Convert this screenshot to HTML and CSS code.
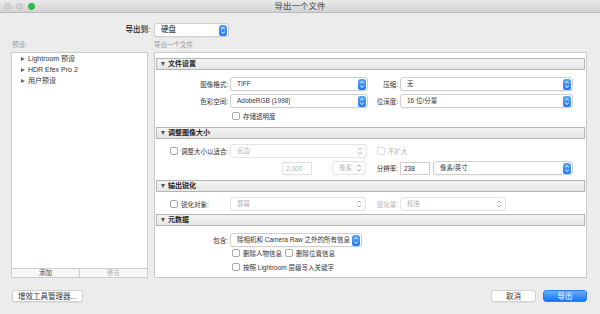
FILE: index.html
```html
<!DOCTYPE html>
<html lang="zh">
<head>
<meta charset="utf-8">
<title>导出一个文件</title>
<link rel="stylesheet" href="styles.css">
</head>
<body>
<div class="window">
  <div class="titlebar">
    <div class="lights">
      <span class="light gray"></span>
      <span class="light gray"></span>
      <span class="light green"></span>
    </div>
    <div class="title">导出一个文件</div>
  </div>

  <div class="dest">
    <span class="dest-label">导出到:</span>
    <div class="select w-dest"><span class="val big">硬盘</span><span class="stepper"></span></div>
  </div>

  <div class="caps">
    <span class="cap-left">预设:</span>
    <span class="cap-right">导出一个文件</span>
  </div>

  <div class="main">
    <div class="left">
      <ul class="presets">
        <li><span class="tri"></span>Lightroom 预设</li>
        <li><span class="tri"></span>HDR Efex Pro 2</li>
        <li><span class="tri"></span>用户预设</li>
      </ul>
      <div class="lbtns">
        <span class="lbtn">添加</span>
        <span class="lbtn off">移去</span>
      </div>
    </div>

    <div class="right">
      <div class="sec-head"><span class="dtri"></span>文件设置</div>
      <div class="sec-body b1">
        <div class="row">
          <span class="lbl l-main">图像格式:</span>
          <div class="select w-138"><span class="val">TIFF</span><span class="stepper"></span></div>
          <span class="lbl l-mid">压缩:</span>
          <div class="select w-173"><span class="val">无</span><span class="stepper"></span></div>
        </div>
        <div class="row">
          <span class="lbl l-main">色彩空间:</span>
          <div class="select w-138"><span class="val">AdobeRGB (1998)</span><span class="stepper"></span></div>
          <span class="lbl l-mid">位深度:</span>
          <div class="select w-173"><span class="val">16 位/分量</span><span class="stepper"></span></div>
        </div>
        <div class="crow ind-77"><span class="cb"></span>存储透明度</div>
      </div>

      <div class="sec-head"><span class="dtri"></span>调整图像大小</div>
      <div class="sec-body b2">
        <div class="row">
          <span class="cb ind-15"></span><span class="lbl l-cb">调整大小以适合:</span>
          <div class="select dis w-137"><span class="val">长边</span><span class="arrows"></span></div>
          <span class="cb dis-cb ind-10"></span><span class="dtext">不扩大</span>
        </div>
        <div class="row">
          <span class="input dis-in ind-127">2,000</span>
          <div class="select dis w-34 gap-20"><span class="val">像素</span><span class="arrows"></span></div>
          <span class="lbl l-mid3">分辨率:</span>
          <span class="input w-30">238</span>
          <div class="select w-140 gap-3"><span class="val">像素/英寸</span><span class="stepper"></span></div>
        </div>
      </div>

      <div class="sec-head"><span class="dtri"></span>输出锐化</div>
      <div class="sec-body b3">
        <div class="row">
          <span class="cb ind-15"></span><span class="lbl l-cb">锐化对象:</span>
          <div class="select dis w-136"><span class="val">屏幕</span><span class="arrows"></span></div>
          <span class="lbl l-mid3 dtext">锐化量:</span>
          <div class="select dis w-106"><span class="val">标准</span><span class="arrows"></span></div>
        </div>
      </div>

      <div class="sec-head"><span class="dtri"></span>元数据</div>
      <div class="sec-body b4">
        <div class="row">
          <span class="lbl l-main">包含:</span>
          <div class="select w-132"><span class="val">除相机和 Camera Raw 之外的所有信息</span><span class="stepper"></span></div>
        </div>
        <div class="crow ind-77">
          <span class="cb"></span><span class="ctext w-42">删除人物信息</span>
          <span class="cb"></span>删除位置信息
        </div>
        <div class="crow ind-77"><span class="cb"></span>按照 Lightroom 层级写入关键字</div>
      </div>
    </div>
  </div>

  <div class="footer">
    <span class="btn plug">增效工具管理器...</span>
    <span class="spacer"></span>
    <span class="btn cancel">取消</span>
    <span class="btn primary">导出</span>
  </div>
</div>
</body>
</html>
```

FILE: styles.css
```css
* { box-sizing: border-box; }
html, body { margin: 0; padding: 0; }
body {
  font-family: "Liberation Sans", "Noto Sans CJK SC", sans-serif;
  font-size: 6.5px;
  color: #333;
  background: #ececec;
}
.window {
  width: 600px;
  height: 314px;
  background: #ececec;
  display: flex;
  flex-direction: column;
  overflow: hidden;
}
.titlebar {
  height: 13px;
  flex: none;
  position: relative;
  background: linear-gradient(#e9e9e9, #d4d4d4);
  border-bottom: 1px solid #b9b9b9;
  display: flex;
  align-items: center;
  justify-content: center;
}
.lights {
  position: absolute;
  left: 4px;
  top: 3px;
  display: flex;
  gap: 5px;
}
.light {
  width: 7px;
  height: 7px;
  border-radius: 50%;
}
.light.gray { background: #d3d3d3; border: 1px solid #c1c1c1; }
.light.green { background: #2bc541; border: 1px solid #22a834; }
.title { font-size: 8.5px; color: #4a4a4a; line-height: 12px; }

.dest {
  height: 27px;
  flex: none;
  display: flex;
  align-items: flex-start;
  padding-top: 10px;
}
.dest-label {
  width: 150px;
  text-align: right;
  line-height: 14px;
  color: #222;
  font-size: 7.5px;
  font-weight: 500;
  margin-right: 4px;
}
.val.big { font-size: 7.5px; color: #222; }
.caps {
  height: 12px;
  flex: none;
  display: flex;
  color: #9a9a9a;
  line-height: 9px;
}
.cap-left { width: 154px; padding-left: 12px; }

.main {
  height: 226px;
  flex: none;
  display: flex;
  padding-left: 11px;
}
.left {
  width: 137px;
  display: flex;
  flex-direction: column;
  margin-right: 6px;
}
.presets {
  flex: 1;
  margin: 0;
  padding: 0 0 0 9px;
  list-style: none;
  background: #fff;
  border: 1px solid #cdcdcd;
  border-bottom: none;
  font-size: 7px;
}
.presets li {
  height: 11px;
  line-height: 11px;
  display: flex;
  align-items: center;
  color: #333;
}
.tri {
  width: 0;
  height: 0;
  border-left: 4px solid #666;
  border-top: 2.5px solid transparent;
  border-bottom: 2.5px solid transparent;
  margin-right: 3px;
}
.lbtns {
  height: 10px;
  display: flex;
  border: 1px solid #cdcdcd;
  background: #f7f7f7;
}
.lbtn {
  flex: 1;
  text-align: center;
  line-height: 8px;
  font-size: 6.5px;
  color: #444;
}
.lbtn + .lbtn { border-left: 1px solid #cdcdcd; }
.lbtn.off { color: #b4b4b4; }

.right {
  width: 433px;
  background: #fff;
  border: 1px solid #c9c9c9;
  padding: 5px 1px 0 1px;
  display: flex;
  flex-direction: column;
}
.sec-head {
  height: 12px;
  flex: none;
  border: 1px solid #b4b4b4;
  background: linear-gradient(#f3f3f3, #e6e6e6);
  display: flex;
  align-items: center;
  padding-left: 4px;
  color: #222;
  line-height: 10px;
  font-size: 7px;
  font-weight: 600;
}
.dtri {
  width: 0;
  height: 0;
  border-top: 4px solid #555;
  border-left: 2.5px solid transparent;
  border-right: 2.5px solid transparent;
  margin-right: 3px;
}
.sec-body { display: flex; flex-direction: column; flex: none; }
.b1 { height: 57px; padding-top: 7px; gap: 3px; }
.b2 { height: 41px; padding-top: 5px; gap: 3px; }
.b3 { height: 22px; padding-top: 5px; }
.b4 { height: 52px; padding-top: 7px; }
.b4 .crow:nth-child(2) { margin-top: 1px; }
.b4 .crow:nth-child(3) { margin-top: 4px; }

.row {
  height: 14px;
  display: flex;
  align-items: center;
  flex: none;
}
.crow {
  height: 10px;
  display: flex;
  align-items: center;
  flex: none;
  color: #333;
}
.lbl { text-align: right; color: #333; white-space: nowrap; }
.l-main { width: 72px; margin-right: 2px; }
.l-mid { width: 30px; margin-right: 2px; }
.l-mid3 { width: 32px; margin-right: 2px; }
.l-cb { width: 46px; margin-right: 3px; text-align: left; }

.ind-77 { padding-left: 76px; }
.ind-15 { margin-left: 14px; }
.ind-10 { margin-left: 10px; }
.ind-127 { margin-left: 126px; }
.gap-20 { margin-left: 20px; }
.gap-3 { margin-left: 3px; }

.select {
  height: 14px;
  border: 1px solid #cfcfcf;
  border-radius: 3px;
  background: #fff;
  box-shadow: 0 0.5px 0.5px rgba(0,0,0,0.08);
  display: flex;
  align-items: center;
  justify-content: space-between;
  padding: 0 1px 0 6px;
  flex: none;
  color: #333;
  white-space: nowrap;
}
.select .val { line-height: 12px; overflow: hidden; }
.w-dest { width: 75px; }
.w-138 { width: 138px; }
.w-173 { width: 173px; }
.w-137 { width: 137px; }
.w-136 { width: 136px; }
.w-34 { width: 34px; }
.w-140 { width: 140px; }
.w-106 { width: 106px; }
.w-132 { width: 132px; }
.w-30 { width: 30px; }

.stepper {
  width: 8px;
  height: 11px;
  border-radius: 2.5px;
  background-color: #2f88f2;
  background-image:
    url("data:image/svg+xml;utf8,<svg xmlns='http://www.w3.org/2000/svg' width='8' height='11' viewBox='0 0 8 11'><path d='M2.2 4.2 L4 2.5 L5.8 4.2 M2.2 6.8 L4 8.5 L5.8 6.8' fill='none' stroke='white' stroke-width='1'/></svg>"),
    linear-gradient(#5aa5f8, #1f78ee);
  flex: none;
}
.select.dis { border-color: #e4e4e4; box-shadow: none; color: #b3b3b3; padding-right: 3px; }
.arrows {
  width: 6px;
  height: 10px;
  flex: none;
  background-image: url("data:image/svg+xml;utf8,<svg xmlns='http://www.w3.org/2000/svg' width='6' height='10' viewBox='0 0 6 10'><path d='M1.2 3.8 L3 2 L4.8 3.8 M1.2 6.2 L3 8 L4.8 6.2' fill='none' stroke='%23a8a8a8' stroke-width='0.9'/></svg>");
}

.input {
  height: 13px;
  width: 30px;
  border: 1px solid #cfcfcf;
  background: #fff;
  line-height: 11px;
  padding-left: 3px;
  flex: none;
  color: #333;
}
.dis-in { border-color: #e2e2e2; color: #b3b3b3; }

.cb {
  width: 8px;
  height: 8px;
  border: 1px solid #a9a9a9;
  border-radius: 2px;
  background: #fff;
  margin-right: 3px;
  flex: none;
}
.dis-cb { border-color: #dadada; }
.dtext { color: #b3b3b3; }
.ctext { display: inline-block; white-space: nowrap; }
.w-42 { width: 42px; }

.footer {
  flex: 1;
  display: flex;
  align-items: flex-start;
  padding: 12px 13px 0 12px;
}
.btn {
  height: 12px;
  line-height: 11px;
  text-align: center;
  border-radius: 3px;
  font-size: 7.5px;
}
.plug {
  width: 71px;
  background: #fff;
  border: 1px solid #cfcfcf;
  box-shadow: 0 0.5px 0.5px rgba(0,0,0,0.1);
  color: #333;
}
.spacer { flex: 1; }
.cancel {
  width: 45px;
  background: #fff;
  border: 1px solid #d2d2d2;
  box-shadow: 0 0.5px 0.5px rgba(0,0,0,0.1);
  color: #333;
  margin-right: 7px;
}
.primary {
  width: 44px;
  background: linear-gradient(#67aef8, #1a74ee);
  border: 1px solid #2f7fe8;
  color: #fff;
}
```
